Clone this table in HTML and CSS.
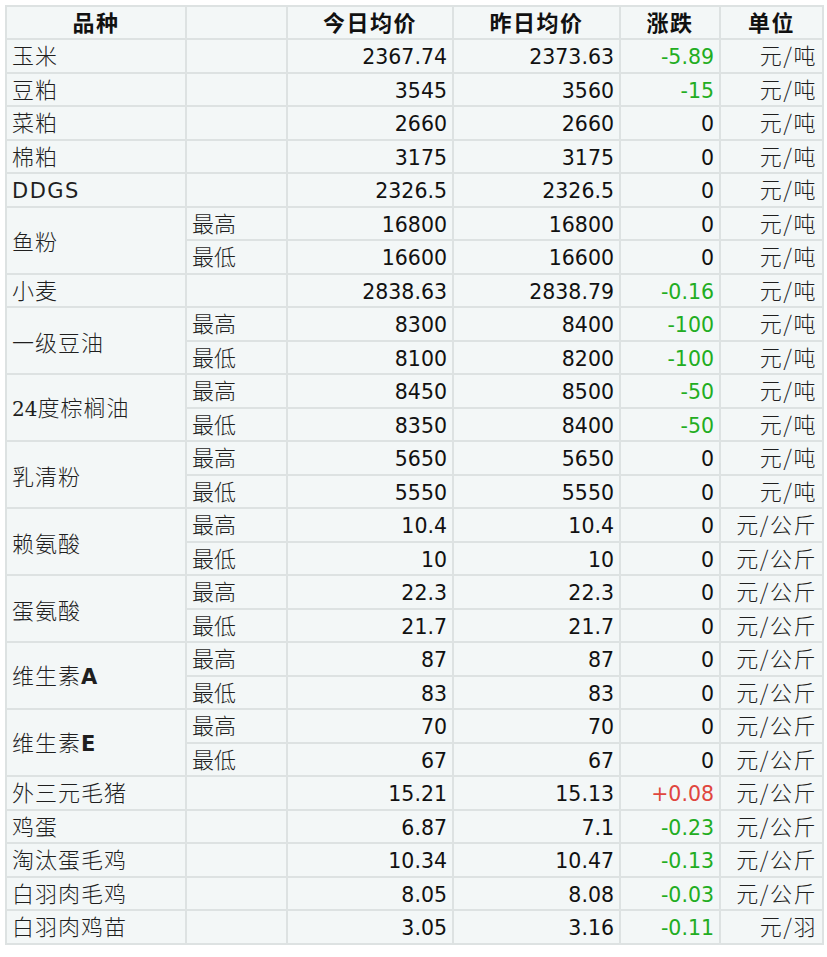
FILE: index.html
```html
<!DOCTYPE html>
<html lang="zh">
<head>
<meta charset="utf-8">
<title>饲料原料价格</title>
<link rel="stylesheet" href="styles.css">
</head>
<body>
<table class="price">
  <colgroup>
    <col class="c-name"><col class="c-sub"><col class="c-num"><col class="c-num2"><col class="c-chg"><col class="c-unit">
  </colgroup>
  <thead>
    <tr><th>品种</th><th></th><th>今日均价</th><th>昨日均价</th><th>涨跌</th><th>单位</th></tr>
  </thead>
  <tbody>
    <tr><td class="name">玉米</td><td class="sub"></td><td class="num">2367.74</td><td class="num">2373.63</td><td class="num down">-5.89</td><td class="unit">元/吨</td></tr>
    <tr><td class="name">豆粕</td><td class="sub"></td><td class="num">3545</td><td class="num">3560</td><td class="num down">-15</td><td class="unit">元/吨</td></tr>
    <tr><td class="name">菜粕</td><td class="sub"></td><td class="num">2660</td><td class="num">2660</td><td class="num">0</td><td class="unit">元/吨</td></tr>
    <tr><td class="name">棉粕</td><td class="sub"></td><td class="num">3175</td><td class="num">3175</td><td class="num">0</td><td class="unit">元/吨</td></tr>
    <tr><td class="name latin">DDGS</td><td class="sub"></td><td class="num">2326.5</td><td class="num">2326.5</td><td class="num">0</td><td class="unit">元/吨</td></tr>
    <tr><td class="name grp" rowspan="2">鱼粉</td><td class="sub">最高</td><td class="num">16800</td><td class="num">16800</td><td class="num">0</td><td class="unit">元/吨</td></tr>
    <tr><td class="sub">最低</td><td class="num">16600</td><td class="num">16600</td><td class="num">0</td><td class="unit">元/吨</td></tr>
    <tr><td class="name">小麦</td><td class="sub"></td><td class="num">2838.63</td><td class="num">2838.79</td><td class="num down">-0.16</td><td class="unit">元/吨</td></tr>
    <tr><td class="name grp" rowspan="2">一级豆油</td><td class="sub">最高</td><td class="num">8300</td><td class="num">8400</td><td class="num down">-100</td><td class="unit">元/吨</td></tr>
    <tr><td class="sub">最低</td><td class="num">8100</td><td class="num">8200</td><td class="num down">-100</td><td class="unit">元/吨</td></tr>
    <tr><td class="name grp" rowspan="2"><span class="serif">24</span>度棕榈油</td><td class="sub">最高</td><td class="num">8450</td><td class="num">8500</td><td class="num down">-50</td><td class="unit">元/吨</td></tr>
    <tr><td class="sub">最低</td><td class="num">8350</td><td class="num">8400</td><td class="num down">-50</td><td class="unit">元/吨</td></tr>
    <tr><td class="name grp" rowspan="2">乳清粉</td><td class="sub">最高</td><td class="num">5650</td><td class="num">5650</td><td class="num">0</td><td class="unit">元/吨</td></tr>
    <tr><td class="sub">最低</td><td class="num">5550</td><td class="num">5550</td><td class="num">0</td><td class="unit">元/吨</td></tr>
    <tr><td class="name grp" rowspan="2">赖氨酸</td><td class="sub">最高</td><td class="num">10.4</td><td class="num">10.4</td><td class="num">0</td><td class="unit">元/公斤</td></tr>
    <tr><td class="sub">最低</td><td class="num">10</td><td class="num">10</td><td class="num">0</td><td class="unit">元/公斤</td></tr>
    <tr><td class="name grp" rowspan="2">蛋氨酸</td><td class="sub">最高</td><td class="num">22.3</td><td class="num">22.3</td><td class="num">0</td><td class="unit">元/公斤</td></tr>
    <tr><td class="sub">最低</td><td class="num">21.7</td><td class="num">21.7</td><td class="num">0</td><td class="unit">元/公斤</td></tr>
    <tr><td class="name grp" rowspan="2">维生素<b class="vit">A</b></td><td class="sub">最高</td><td class="num">87</td><td class="num">87</td><td class="num">0</td><td class="unit">元/公斤</td></tr>
    <tr><td class="sub">最低</td><td class="num">83</td><td class="num">83</td><td class="num">0</td><td class="unit">元/公斤</td></tr>
    <tr><td class="name grp" rowspan="2">维生素<b class="vit">E</b></td><td class="sub">最高</td><td class="num">70</td><td class="num">70</td><td class="num">0</td><td class="unit">元/公斤</td></tr>
    <tr><td class="sub">最低</td><td class="num">67</td><td class="num">67</td><td class="num">0</td><td class="unit">元/公斤</td></tr>
    <tr><td class="name">外三元毛猪</td><td class="sub"></td><td class="num">15.21</td><td class="num">15.13</td><td class="num up">+0.08</td><td class="unit">元/公斤</td></tr>
    <tr><td class="name">鸡蛋</td><td class="sub"></td><td class="num">6.87</td><td class="num">7.1</td><td class="num down">-0.23</td><td class="unit">元/公斤</td></tr>
    <tr><td class="name">淘汰蛋毛鸡</td><td class="sub"></td><td class="num">10.34</td><td class="num">10.47</td><td class="num down">-0.13</td><td class="unit">元/公斤</td></tr>
    <tr><td class="name">白羽肉毛鸡</td><td class="sub"></td><td class="num">8.05</td><td class="num">8.08</td><td class="num down">-0.03</td><td class="unit">元/公斤</td></tr>
    <tr><td class="name">白羽肉鸡苗</td><td class="sub"></td><td class="num">3.05</td><td class="num">3.16</td><td class="num down">-0.11</td><td class="unit">元/羽</td></tr>
  </tbody>
</table>
</body>
</html>
```

FILE: styles.css
```css
html, body {
  margin: 0;
  padding: 0;
  background: #ffffff;
}

body {
  padding: 5px 0 0 5px;
  font-family: "DejaVu Sans", "Noto Sans CJK SC", sans-serif;
  color: #111111;
}

.price {
  border-collapse: collapse;
  table-layout: fixed;
  width: 817px;
  background: #f3f7f7;
}

.c-name { width: 180px; }
.c-sub { width: 101px; }
.c-num { width: 166px; }
.c-num2 { width: 167px; }
.c-chg { width: 100px; }
.c-unit { width: 103px; }

.price th,
.price td {
  border: 2px solid #dde2e2;
  padding: 2px 5px 0 5px;
  vertical-align: baseline;
  line-height: 24px;
  white-space: nowrap;
  overflow: hidden;
}

.price thead tr { height: 33px; }
.price tbody tr { height: 33.5px; }

.price th {
  font-family: "Noto Sans CJK SC", "DejaVu Sans", sans-serif;
  font-weight: 700;
  font-size: 22px;
  letter-spacing: 1.5px;
  text-align: center;
  color: #111111;
}

.name,
.sub {
  font-family: "Noto Sans CJK SC", "DejaVu Sans", sans-serif;
  font-weight: 300;
  font-size: 22px;
  color: #1f1f1f;
  text-align: left;
}

.name {
  padding-left: 6px;
  letter-spacing: 1px;
}

.price td.grp {
  vertical-align: middle;
  padding-top: 0;
}

.name.latin {
  font-family: "DejaVu Sans", sans-serif;
  font-weight: 400;
  font-size: 21px;
  letter-spacing: 1.5px;
}

.serif {
  font-family: "DejaVu Serif", "Liberation Serif", serif;
  font-weight: 400;
  font-size: 20px;
  letter-spacing: 0;
}

.vit {
  font-family: "DejaVu Sans", sans-serif;
  font-weight: 700;
  font-size: 21px;
}

.num {
  font-family: "DejaVu Sans", sans-serif;
  font-size: 20.5px;
  text-align: right;
}

.down { color: #22ad22; }
.up { color: #e0463e; }

.unit {
  font-family: "Noto Sans CJK SC", "DejaVu Sans", sans-serif;
  font-weight: 300;
  font-size: 22px;
  letter-spacing: 1.5px;
  color: #1f1f1f;
  text-align: right;
}

.price td.unit { padding-right: 5px; }
```
